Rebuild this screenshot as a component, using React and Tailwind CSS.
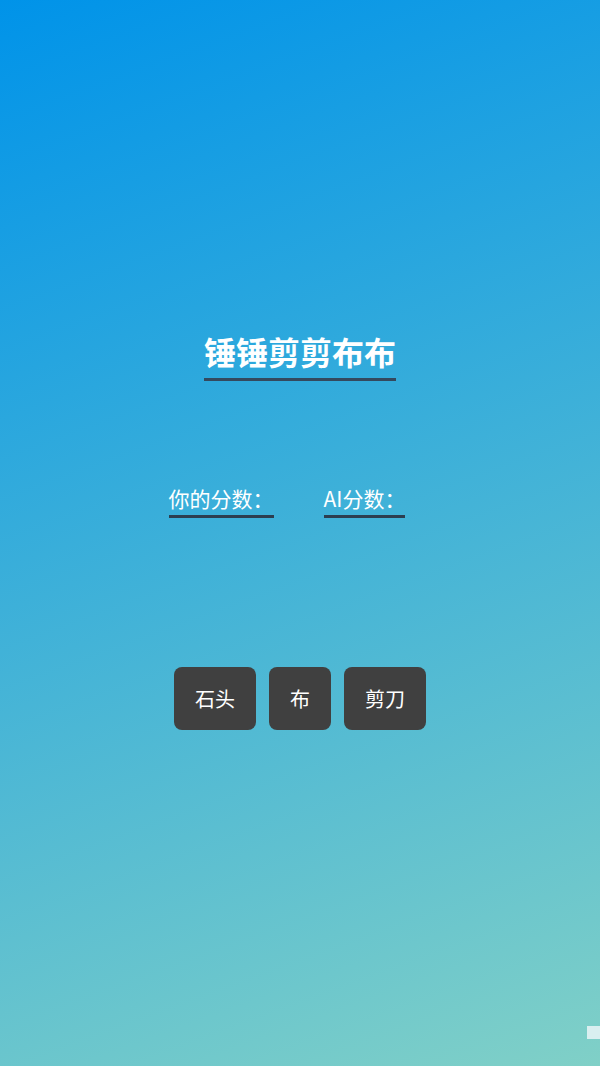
export default function App() {
  const moves = ["石头", "布", "剪刀"];
  return (
    <div
      className="relative min-h-[1066px] w-full bg-[linear-gradient(160deg,#0093E9_0%,#80D0C7_100%)] flex flex-col items-center text-white"
      style={{ fontFamily: '"Noto Sans CJK SC", "Noto Sans", sans-serif' }}
    >
      {/* Title */}
      <h1 className="mt-[327px] text-[32px] font-bold leading-[48px] border-b-[3px] border-[#34495e] pb-[3px]">
        锤锤剪剪布布
      </h1>

      {/* Scores */}
      <div className="mt-[102px] mr-[26px] flex gap-[50px] text-[21px] leading-[30px]">
        <span className="border-b-[3px] border-[#2c3e50] pb-[2px]">你的分数：</span>
        <span className="border-b-[3px] border-[#2c3e50] pb-[2px]">AI分数：</span>
      </div>

      {/* Moves */}
      <div className="mt-[149px] flex gap-[13px]">
        {moves.map((m) => (
          <button
            key={m}
            className="h-[63px] px-[21px] rounded-lg bg-[#404040] text-white text-[20px]"
          >
            {m}
          </button>
        ))}
      </div>

      <div className="absolute right-0 bottom-[27px] w-[13px] h-[13px] bg-[#d9eff0]" />
    </div>
  );
}
